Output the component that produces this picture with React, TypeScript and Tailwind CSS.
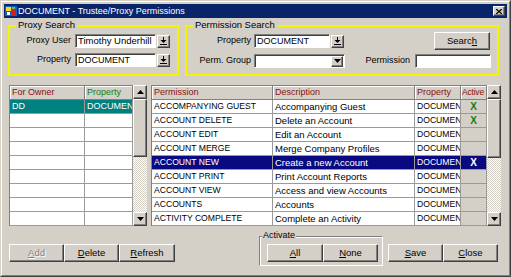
import React from "react";

const raised =
  "border border-t-white border-l-white border-r-[#404040] border-b-[#404040] shadow-[inset_-1px_-1px_0_#808080] bg-[#d4d0c8]";
const sunken =
  "border border-t-[#808080] border-l-[#808080] border-r-white border-b-white shadow-[inset_1px_1px_0_#404040] bg-white";

function DropBtn() {
  return (
    <div className={`${raised} w-[13px] h-[13px] flex items-center justify-center shrink-0`}>
      <svg width="7" height="8" viewBox="0 0 7 8">
        <rect x="3" y="0" width="1" height="3" fill="#000" />
        <polygon points="0.5,3 6.5,3 3.5,6" fill="#000" />
        <rect x="0" y="7" width="7" height="1" fill="#000" />
      </svg>
    </div>
  );
}

function Tri({ up }: { up?: boolean }) {
  return (
    <svg width="7" height="4" viewBox="0 0 7 4">
      {up ? <polygon points="0,4 7,4 3.5,0" fill="#000" /> : <polygon points="0,0 7,0 3.5,4" fill="#000" />}
    </svg>
  );
}

function Btn({ children, w, disabled }: { children: React.ReactNode; w: string; disabled?: boolean }) {
  return (
    <div
      className={`${raised} ${w} h-[18px] flex items-center justify-center text-[9.5px] ${
        disabled ? "text-[#808080] [text-shadow:1px_1px_0_#fff]" : "text-black"
      }`}
    >
      {children}
    </div>
  );
}

function Group({ label, className, children }: { label: string; className: string; children: React.ReactNode }) {
  return (
    <div className={`relative border-2 border-[#f4f400] ${className}`}>
      <span className="absolute -top-[8px] left-[6px] bg-[#d4d0c8] px-[2px] text-[9.5px] leading-[12px]">{label}</span>
      {children}
    </div>
  );
}

function Scroll({ thumb }: { thumb?: number }) {
  return (
    <div className="w-[14px] h-[141px] flex flex-col bg-[repeating-conic-gradient(#ffffff_0_25%,#d4d0c8_0_50%)] bg-[length:2px_2px]">
      <div className={`${raised} h-[14px] flex items-center justify-center shrink-0`}>
        <Tri up />
      </div>
      {thumb ? (
        <div className={`${raised}`} style={{ height: thumb }} />
      ) : (
        <div className={`${raised} flex-1`} />
      )}
      <div className="flex-1" />
      <div className={`${raised} h-[14px] flex items-center justify-center shrink-0`}>
        <Tri />
      </div>
    </div>
  );
}

const rows = [
  ["ACCOMPANYING GUEST", "Accompanying Guest", "DOCUMENT", "g"],
  ["ACCOUNT DELETE", "Delete an Account", "DOCUMENT", "g"],
  ["ACCOUNT EDIT", "Edit an Account", "DOCUMENT", ""],
  ["ACCOUNT MERGE", "Merge Company Profiles", "DOCUMENT", ""],
  ["ACCOUNT NEW", "Create a new Account", "DOCUMENT", "s"],
  ["ACCOUNT PRINT", "Print Account Reports", "DOCUMENT", ""],
  ["ACCOUNT VIEW", "Access and view Accounts", "DOCUMENT", ""],
  ["ACCOUNTS", "Accounts", "DOCUMENT", ""],
  ["ACTIVITY COMPLETE", "Complete an Activity", "DOCUMENT", ""],
];

const cell = "h-[14px] border-r border-b border-[#9a9a9a] overflow-hidden whitespace-nowrap pl-[2px] leading-[13px]";
const head = "h-[14px] border-r border-b border-[#808080] bg-[#d4d0c8] overflow-hidden whitespace-nowrap pl-[2px] leading-[13px] shadow-[inset_1px_1px_0_#fff]";

export default function App() {
  return (
    <div
      className="w-[511px] h-[277px] bg-[#d4d0c8] border border-t-[#d4d0c8] border-l-[#d4d0c8] border-r-[#404040] border-b-[#404040] text-black"
      style={{ fontFamily: '"Liberation Sans", Arial, sans-serif' }}
    >
      <div className="w-full h-full border border-t-white border-l-white border-r-[#808080] border-b-[#808080] p-[2px] flex flex-col">
        {/* Title bar */}
        <div className="h-[14px] bg-[#0a246a] flex items-center pl-[1px] pr-[2px] shrink-0">
          <svg width="12" height="12" viewBox="0 0 12 12" className="shrink-0">
            <rect x="0" y="1" width="12" height="10" fill="#1c5cc8" />
            <rect x="1" y="2" width="5" height="4" fill="#f0e020" />
            <rect x="6" y="5" width="5" height="5" fill="#d02020" />
            <rect x="2" y="7" width="3" height="3" fill="#ffffff" />
            <rect x="7" y="2" width="3" height="2" fill="#60c060" />
          </svg>
          <span className="text-white text-[9px] leading-[14px] ml-[1px] whitespace-nowrap">
            DOCUMENT - Trustee/Proxy Permissions
          </span>
          <div className="flex-1" />
          <div className={`${raised} w-[12px] h-[10px] flex items-center justify-center`}>
            <svg width="6" height="5" viewBox="0 0 6 5">
              <path d="M0 0 L6 5 M6 0 L0 5" stroke="#000" strokeWidth="1.3" />
            </svg>
          </div>
        </div>

        {/* Search groups */}
        <div className="flex pl-[4px] mt-[7px] gap-[6px] text-[9px]">
          <Group label="Proxy Search" className="w-[171px] h-[51px]">
            <div className="flex flex-col gap-[5px] pt-[7px]">
              <div className="flex items-center h-[14px]">
                <span className="w-[61px] text-right">Proxy User</span>
                <div className={`${sunken} ml-[4px] w-[81px] h-[14px] leading-[12px] pl-[2px] text-[9.5px] overflow-hidden whitespace-nowrap`}>
                  Timothy Underhill
                </div>
                <div className="ml-[1px]"><DropBtn /></div>
              </div>
              <div className="flex items-center h-[14px]">
                <span className="w-[61px] text-right">Property</span>
                <div className={`${sunken} ml-[4px] w-[81px] h-[14px] leading-[12px] pl-[2px] overflow-hidden whitespace-nowrap`}>
                  DOCUMENT
                </div>
                <div className="ml-[1px]"><DropBtn /></div>
              </div>
            </div>
          </Group>

          <Group label="Permission Search" className="w-[314px] h-[51px]">
            <div className="flex flex-col gap-[4px] pt-[5px]">
              <div className="flex items-center h-[18px]">
                <span className="w-[64px] text-right">Property</span>
                <div className={`${sunken} ml-[3px] w-[76px] h-[14px] leading-[12px] pl-[2px] overflow-hidden whitespace-nowrap`}>
                  DOCUMENT
                </div>
                <div className="ml-[1px]"><DropBtn /></div>
                <div className="flex-1" />
                <div className="mr-[7px]">
                  <Btn w="w-[56px]">
                    <span>Searc<u>h</u></span>
                  </Btn>
                </div>
              </div>
              <div className="flex items-center h-[14px]">
                <span className="w-[64px] text-right">Perm. Group</span>
                <div className={`${sunken} ml-[3px] w-[91px] h-[14px] flex justify-end items-center pr-[1px]`}>
                  <div className={`${raised} w-[12px] h-[11px] flex items-center justify-center`}>
                    <Tri />
                  </div>
                </div>
                <div className="flex-1" />
                <span>Permission</span>
                <div className={`${sunken} ml-[5px] mr-[6px] w-[76px] h-[14px]`} />
              </div>
            </div>
          </Group>
        </div>

        {/* Tables */}
        <div className="flex pl-[5px] mt-[9px] text-[9px]">
          <div className="flex">
            <div className="border-l border-t border-[#808080] bg-white grid grid-cols-[75px_48px] h-[141px]">
              <div className={`${head} text-[#8b1010]`}>For Owner</div>
              <div className={`${head} text-[#108010]`}>Property</div>
              <div className={`${cell} bg-[#008080] text-white`}>DD</div>
              <div className={`${cell} bg-[#008080] text-white`}>DOCUMENT</div>
              {Array.from({ length: 8 }).map((_, i) => (
                <React.Fragment key={i}>
                  <div className={cell} />
                  <div className={cell} />
                </React.Fragment>
              ))}
            </div>
            <Scroll />
          </div>

          <div className="flex ml-[4px]">
            <div className="border-l border-t border-[#808080] bg-white grid grid-cols-[121px_142px_46px_26px] h-[141px]">
              <div className={`${head} text-[#8b1010]`}>Permission</div>
              <div className={`${head} text-[#8b1010]`}>Description</div>
              <div className={`${head} text-[#8b1010]`}>Property</div>
              <div className="h-[14px] border-r border-b border-[#808080] bg-[#d4d0c8] whitespace-nowrap pl-[1px] leading-[13px] text-[8.5px] tracking-[-0.2px] shadow-[inset_1px_1px_0_#fff] text-[#8b1010]">
                Active
              </div>
              {rows.map((r, i) => {
                const sel = r[3] === "s";
                const base = sel ? "bg-[#0a0a80] text-white" : "";
                return (
                  <React.Fragment key={i}>
                    <div className={`${cell} ${base} text-[8.6px]`}>{r[0]}</div>
                    <div className={`${cell} ${base} text-[9.5px]`}>{r[1]}</div>
                    <div className={`${cell} ${base} text-[8.6px]`}>{r[2]}</div>
                    <div
                      className={`h-[14px] border-r border-b border-[#9a9a9a] flex items-center justify-center font-bold text-[10px] ${
                        sel ? "bg-[#0a0a80] text-white" : "bg-[#d4d0c8] text-[#108010]"
                      }`}
                    >
                      {r[3] ? "X" : ""}
                    </div>
                  </React.Fragment>
                );
              })}
            </div>
            <Scroll thumb={59} />
          </div>
        </div>

        {/* Bottom buttons */}
        <div className="flex pl-[5px] mt-[10px] h-[30px]">
          <div className="flex mt-[8px] h-[18px]">
            <Btn w="w-[55px]" disabled>
              <span><u>A</u>dd</span>
            </Btn>
            <Btn w="w-[55px]">
              <span><u>D</u>elete</span>
            </Btn>
            <Btn w="w-[56px]">
              <span><u>R</u>efresh</span>
            </Btn>
          </div>
          <div className="ml-[84px] relative w-[124px] h-[30px] border border-t-[#808080] border-l-[#808080] border-r-white border-b-white shadow-[inset_1px_1px_0_#fff,1px_1px_0_#808080_inset]">
            <span className="absolute -top-[7px] left-[2px] bg-[#d4d0c8] px-[1px] text-[9px] leading-[11px]">Activate</span>
            <div className="flex pl-[7px] pt-[7px]">
              <Btn w="w-[56px]">
                <span><u>A</u>ll</span>
              </Btn>
              <Btn w="w-[55px]">
                <span><u>N</u>one</span>
              </Btn>
            </div>
          </div>
          <div className="flex ml-[5px] mt-[8px] h-[18px]">
            <Btn w="w-[55px]">
              <span><u>S</u>ave</span>
            </Btn>
            <Btn w="w-[55px]">
              <span><u>C</u>lose</span>
            </Btn>
          </div>
        </div>
      </div>
    </div>
  );
}
